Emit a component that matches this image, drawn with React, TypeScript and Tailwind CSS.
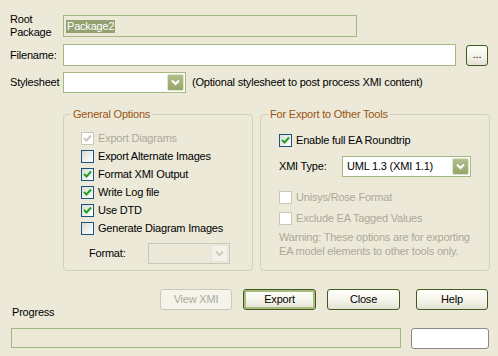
import React from "react";

function Chevron({ color = "#ffffff" }: { color?: string }) {
  return (
    <svg width="9" height="7" viewBox="0 0 9 7">
      <polyline points="1,1.5 4.5,5 8,1.5" fill="none" stroke={color} strokeWidth="2" />
    </svg>
  );
}

function DropBtn({ disabled = false }: { disabled?: boolean }) {
  if (disabled) {
    return (
      <div className="w-[17px] h-full border border-[#e6e4d8] bg-[#f3f2ea] flex items-center justify-center rounded-[2px]">
        <Chevron color="#cbc9bc" />
      </div>
    );
  }
  return (
    <div className="w-[17px] h-full border border-[#dfe5c8] bg-gradient-to-b from-[#b3be8a] to-[#97a56c] flex items-center justify-center rounded-[2px]">
      <Chevron />
    </div>
  );
}

function Check({ checked = false, disabled = false }: { checked?: boolean; disabled?: boolean }) {
  return (
    <div
      className={
        disabled
          ? "w-[13px] h-[13px] border border-[#cac8bb] bg-white flex items-center justify-center shrink-0"
          : "w-[13px] h-[13px] border border-[#1c5180] bg-gradient-to-br from-[#dcdcd7] to-white flex items-center justify-center shrink-0"
      }
    >
      {checked && (
        <svg width="9" height="9" viewBox="0 0 9 9">
          <polyline
            points="1,4 3.5,6.5 8,1.5"
            fill="none"
            stroke={disabled ? "#cac8bb" : "#21a121"}
            strokeWidth="2"
          />
        </svg>
      )}
    </div>
  );
}

function CheckRow({
  label,
  checked,
  disabled,
}: {
  label: string;
  checked?: boolean;
  disabled?: boolean;
}) {
  return (
    <div className="h-[18px] flex items-center">
      <Check checked={checked} disabled={disabled} />
      <span className={"ml-[4px] " + (disabled ? "text-[#aca899]" : "text-black")}>{label}</span>
    </div>
  );
}

function Btn({
  label,
  isDefault = false,
  disabled = false,
  w = "w-[73px]",
}: {
  label: string;
  isDefault?: boolean;
  disabled?: boolean;
  w?: string;
}) {
  if (disabled) {
    return (
      <div
        className={
          w +
          " h-[21px] rounded-[3px] border border-[#cac8bb] bg-[#f5f4ea] text-[#aca899] flex items-center justify-center"
        }
      >
        {label}
      </div>
    );
  }
  return (
    <div
      className={
        w +
        " h-[21px] rounded-[3px] border border-[#3e5b20] bg-gradient-to-b from-[#fffffa] via-[#f6f5ec] to-[#e4e1d2] flex items-center justify-center " +
        (isDefault ? "shadow-[inset_0_0_0_2px_#a9bb7f]" : "")
      }
    >
      {label}
    </div>
  );
}

export default function App() {
  return (
    <div className="w-[498px] h-[356px] bg-[#ECE9D8] text-[11px] leading-[13px] tracking-[-0.2px] text-black font-['Liberation_Sans',sans-serif] flex flex-col overflow-hidden">
      {/* Root package */}
      <div className="flex items-start mt-[13px] pl-[10px]">
        <div className="w-[53px]">
          <div>Root</div>
          <div>Package</div>
        </div>
        <div className="w-[294px] h-[22px] mt-[2px] border border-[#a4b97f] bg-[#ECE9D8] flex items-center pl-[2px]">
          <span className="bg-[#93a070] text-white px-[1px] leading-[13px]">Package2</span>
        </div>
      </div>

      {/* Filename */}
      <div className="flex items-center mt-[5px] pl-[10px]">
        <div className="w-[53px]">Filename:</div>
        <div className="w-[393px] h-[22px] border border-[#a4b97f] bg-white" />
        <div className="ml-[10px] w-[22px] h-[21px] rounded-[3px] border border-[#3e5b20] bg-gradient-to-b from-[#fffffa] via-[#f6f5ec] to-[#e4e1d2] flex items-center justify-center leading-none pb-[2px]">
          ...
        </div>
      </div>

      {/* Stylesheet */}
      <div className="flex items-center mt-[6px] pl-[10px]">
        <div className="w-[53px]">Stylesheet</div>
        <div className="w-[123px] h-[21px] border border-[#a4b97f] bg-white flex justify-end p-[1px]">
          <DropBtn />
        </div>
        <div className="ml-[6px]">(Optional stylesheet to post process XMI content)</div>
      </div>

      {/* Groups */}
      <div className="flex mt-[21px] pl-[63px] gap-[7px]">
        <div className="relative w-[190px] h-[157px] border border-[#d0d0bf] rounded-[4px] pl-[17px] pt-[14px]">
          <span className="absolute left-[7px] top-[-7px] px-[2px] bg-[#ECE9D8] text-[#9a5410]">General Options</span>
          <CheckRow label="Export Diagrams" checked disabled />
          <CheckRow label="Export Alternate Images" />
          <CheckRow label="Format XMI Output" checked />
          <CheckRow label="Write Log file" checked />
          <CheckRow label="Use DTD" checked />
          <CheckRow label="Generate Diagram Images" />
          <div className="flex items-center mt-[6px] pl-[8px]">
            <div className="w-[59px]">Format:</div>
            <div className="w-[82px] h-[21px] border border-[#cac8bb] bg-[#ECE9D8] flex justify-end p-[1px]">
              <DropBtn disabled />
            </div>
          </div>
        </div>

        <div className="relative w-[230px] h-[157px] border border-[#d0d0bf] rounded-[4px] pl-[18px] pt-[16px]">
          <span className="absolute left-[7px] top-[-7px] px-[2px] bg-[#ECE9D8] text-[#9a5410]">For Export to Other Tools</span>
          <CheckRow label="Enable full EA Roundtrip" checked />
          <div className="flex items-center mt-[7px]">
            <div className="w-[63px]">XMI Type:</div>
            <div className="w-[129px] h-[21px] border border-[#a4b97f] bg-white flex items-stretch p-[1px]">
              <div className="flex-1 flex items-center pl-[3px]">UML 1.3 (XMI 1.1)</div>
              <DropBtn />
            </div>
          </div>
          <div className="mt-[11px]">
            <CheckRow label="Unisys/Rose Format" disabled />
          </div>
          <div className="mt-[3px]">
            <CheckRow label="Exclude EA Tagged Values" disabled />
          </div>
          <div className="mt-[3px] text-[#aca899] leading-[14px]">
            <div>Warning: These options are for exporting</div>
            <div>EA model elements to other tools only.</div>
          </div>
        </div>
      </div>

      {/* Buttons + Progress label */}
      <div className="flex items-start mt-[18px] pl-[12px]">
        <div className="w-[148px] pt-[17px]">Progress</div>
        <Btn label="View XMI" disabled w="w-[72px]" />
        <div className="ml-[11px]">
          <Btn label="Export" isDefault />
        </div>
        <div className="ml-[11px]">
          <Btn label="Close" />
        </div>
        <div className="ml-[16px]">
          <Btn label="Help" w="w-[72px]" />
        </div>
      </div>

      {/* Progress bar */}
      <div className="flex items-start mt-[9px] pl-[11px]">
        <div className="w-[390px] h-[20px] border border-[#a4b97f] bg-[#ECE9D8]" />
        <div className="ml-[10px] w-[78px] h-[21px] rounded-[3px] border border-[#8a8a8a] bg-white" />
      </div>
    </div>
  );
}
